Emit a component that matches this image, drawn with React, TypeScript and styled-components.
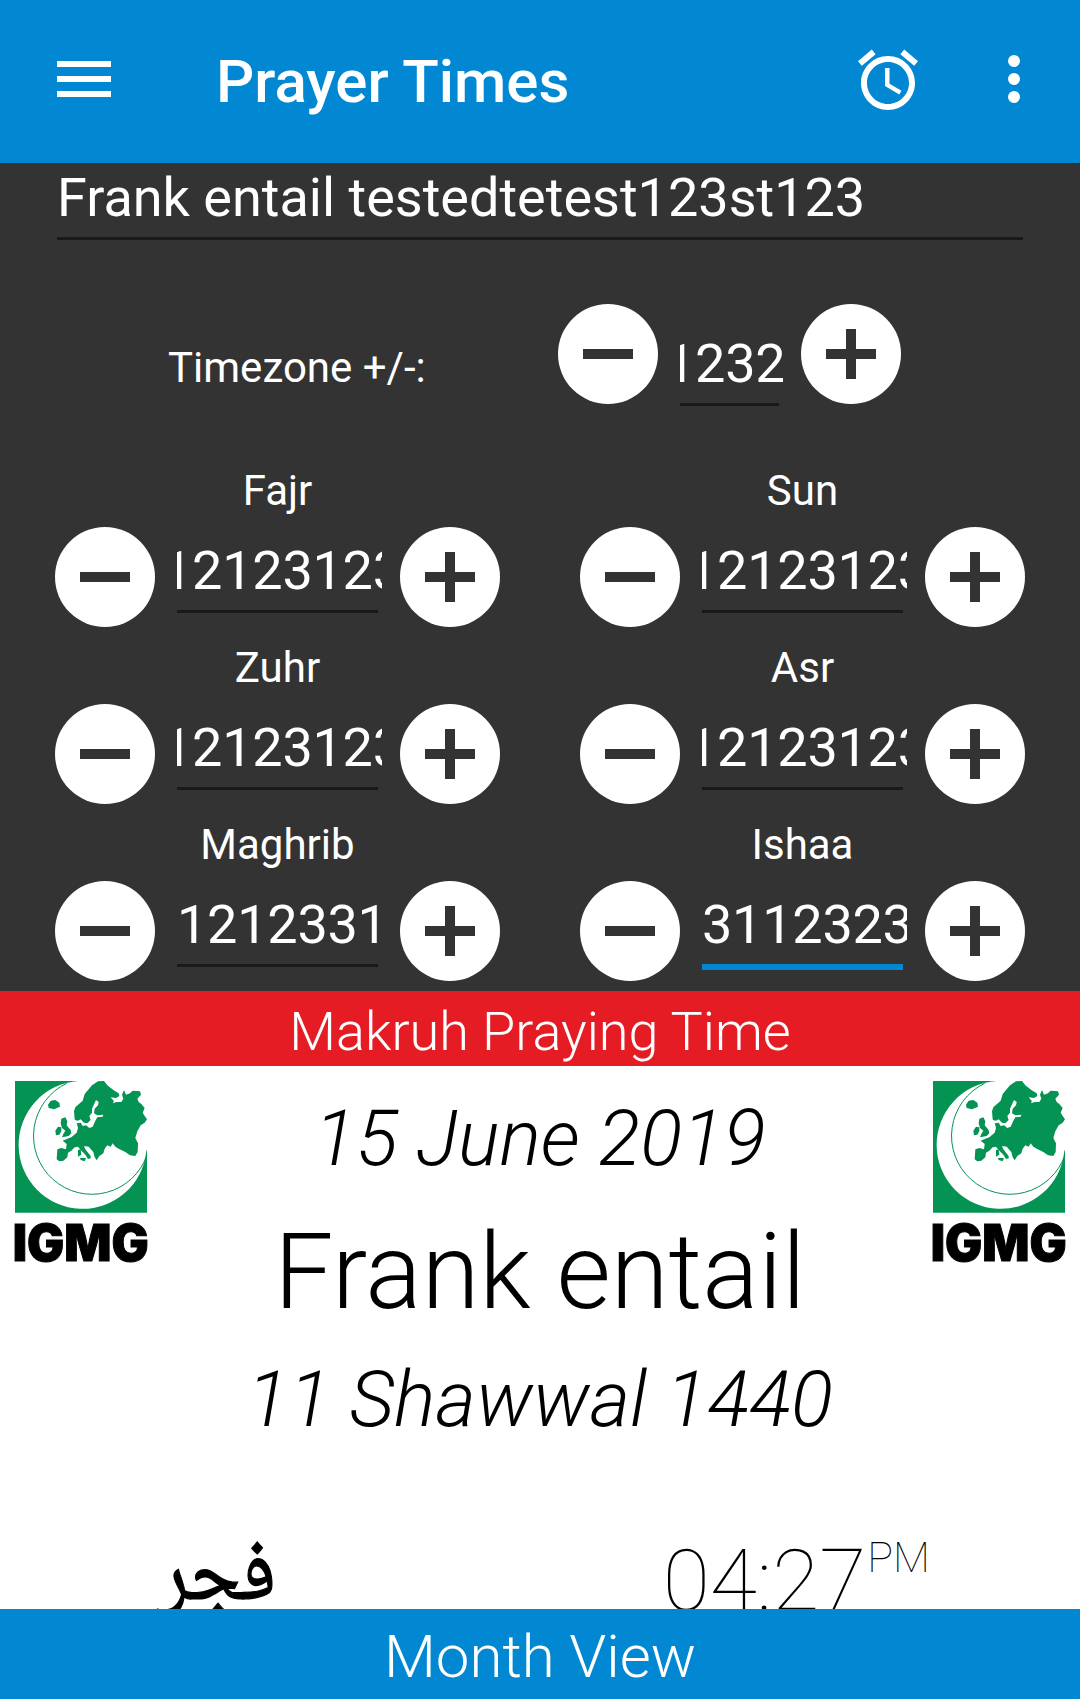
import React from 'react';
import styled, { createGlobalStyle } from 'styled-components';

const blue = '#0288d3';

const Global = createGlobalStyle`
  body { margin: 0; background: #fff; }
  * { box-sizing: border-box; }
`;

const Screen = styled.div`
  width: 1080px;
  height: 1699px;
  overflow: hidden;
  display: flex;
  flex-direction: column;
  font-family: Roboto, "Noto Sans", sans-serif;
  background: #fff;
`;

const AppBar = styled.header`
  height: 163px;
  flex: none;
  display: flex;
  align-items: flex-start;
  padding: 43px 30px 0 48px;
  background: ${blue};
  color: #fff;
`;

const Icon = styled.svg<{ $top?: number }>`
  width: 72px;
  height: 72px;
  flex: none;
  margin-top: ${(p) => p.$top ?? 0}px;
  fill: currentColor;
`;

const Title = styled.h1`
  flex: 1;
  margin: 0 0 0 96px;
  font-size: 60px;
  font-weight: 500;
  line-height: 77px;
  white-space: nowrap;
`;

const Actions = styled.div`
  display: flex;
  gap: 54px;
`;

const Settings = styled.section`
  height: 828px;
  flex: none;
  padding: 0 55px;
  background: #333;
  color: #fff;
`;

const NameField = styled.div`
  height: 77px;
  margin: 0 2px;
  border-bottom: 3px solid #191919;
  font-size: 54px;
  line-height: 69px;
  white-space: nowrap;
`;

const TimezoneRow = styled.div`
  display: flex;
  margin: 64px 0 0 113px;
`;

const TimezoneLabel = styled.div`
  width: 390px;
  font-size: 42px;
  line-height: 127px;
  white-space: nowrap;
`;

const Grid = styled.div`
  display: grid;
  grid-template-columns: 445px 445px;
  column-gap: 80px;
  margin-top: 37px;
`;

const Cell = styled.div`
  height: 177px;
`;

const Label = styled.div`
  height: 59px;
  font-size: 42px;
  line-height: 45px;
  text-align: center;
`;

const Row = styled.div`
  display: flex;
`;

const Round = styled.button`
  width: 100px;
  height: 100px;
  flex: none;
  padding: 25px;
  border: 0;
  border-radius: 50%;
  background: #fff;
  color: #333;
  svg { display: block; fill: currentColor; }
`;

const Field = styled.div<{ $width: number; $drop: number; $focused?: boolean }>`
  width: ${(p) => p.$width}px;
  height: 102px;
  margin: 0 18px 0 22px;
  padding-top: ${(p) => p.$drop}px;
  overflow: hidden;
  font-size: 54px;
  line-height: 87px;
  letter-spacing: -0.25px;
  white-space: nowrap;
  &::after {
    content: '';
    display: block;
    height: ${(p) => (p.$focused ? 6 : 3)}px;
    margin: -4px 4px 0 0;
    background: ${(p) => (p.$focused ? blue : '#191919')};
  }
`;

const Digits = styled.div<{ $shift: number }>`
  text-indent: ${(p) => p.$shift}px;
`;

const Warning = styled.div`
  height: 75px;
  flex: none;
  background: #e61c24;
  color: #fff;
  font-size: 54px;
  font-weight: 300;
  line-height: 81px;
  text-align: center;
`;

const Day = styled.main`
  flex: 1;
  min-height: 0;
  overflow: hidden;
  color: #000;
`;

const Head = styled.div`
  display: flex;
  justify-content: space-between;
  padding: 15px 15px 0;
  height: 443px;
`;

const LogoSvg = styled.svg`
  width: 132px;
  height: 180px;
  flex: none;
  overflow: visible;
`;

const Wordmark = styled.text`
  font-family: Inter, Roboto, sans-serif;
  font-size: 151px;
  font-weight: 900;
  stroke: #000;
  stroke-width: 3px;
`;

const Dates = styled.div`
  display: flex;
  flex-direction: column;
  align-items: center;
  font-weight: 300;
  white-space: nowrap;
`;

const DateLine = styled.div<{ $line: number }>`
  font-size: 77.7px;
  font-style: italic;
  line-height: ${(p) => p.$line}px;
`;

const City = styled.div`
  font-size: 105px;
  line-height: 153px;
`;

const TimeRow = styled.div`
  display: flex;
  justify-content: space-between;
  padding: 0 150px 0 158px;
`;

const Arabic = styled.div`
  font-family: "Noto Naskh Arabic", "Noto Sans Arabic", "DejaVu Sans", sans-serif;
  font-size: 87px;
  line-height: 143px;
  transform: scaleX(0.91);
  transform-origin: left;
  -webkit-text-stroke: 1.2px #000;
`;

const Time = styled.div`
  display: flex;
  font-size: 86px;
  font-weight: 100;
  line-height: 144px;
`;

const Meridiem = styled.span`
  margin-left: 1px;
  font-size: 43px;
  line-height: 96px;
`;

const MonthButton = styled.footer`
  height: 90px;
  flex: none;
  background: ${blue};
  color: #fff;
  font-size: 60px;
  font-weight: 300;
  line-height: 95px;
  text-align: center;
`;

type StepperProps = { value: string; width?: number; shift?: number; drop?: number; focused?: boolean };

function Stepper({ value, width = 205, shift = 0, drop = 0, focused }: StepperProps) {
  return (
    <Row>
      <Round aria-label="decrease">
        <svg width="50" height="50"><path d="M0 20h50v10H0z" /></svg>
      </Round>
      <Field $width={width} $drop={drop} $focused={focused}>
        <Digits $shift={shift}>{value}</Digits>
      </Field>
      <Round aria-label="increase">
        <svg width="50" height="50"><path d="M0 20h20V0h10v20h20v10H30v20H20V30H0z" /></svg>
      </Round>
    </Row>
  );
}

function Logo() {
  return (
    <LogoSvg viewBox="45 33 396 540">
      <path fill="#049353" d="M45 33h396v395H45z" />
      <path fill="#fff" d="M235 33A192 192 0 1 0 439 243L441 240V33z" />
      <path fill="none" stroke="#049353" strokeWidth="3" d="M200 40A175 175 0 1 0 441 255" />
      <g transform="translate(150 24)" fill="#049353">
        <path d="M72 100L76 88 98 68 104 48 126 22 144 10 162 9 172 22 190 36 206 46 208 54 198 60 182 58 192 70 188 76 200 72 214 72 220 62 216 50 222 36 228 50 240 46 248 38 270 40 273 50 262 62 266 72 274 78 284 90 278 104 284 114 291 124 284 134 272 142 262 160 256 180 264 196 263 222 256 234 240 232 226 222 206 212 196 206 188 196 182 206 172 202 164 212 160 226 148 234 140 247 134 238 130 222 116 206 102 204 106 214 122 234 122 241 114 243 106 230 92 216 84 206 74 208 64 218 54 224 52 238 40 248 28 250 20 244 22 214 34 210 48 214 50 198 38 188 52 182 64 178 80 164 84 150 80 134 74 124z" />
        <path d="M34 122L46 118 52 130 50 142 62 156 64 166 56 174 36 178 40 168 46 158 36 150 32 136zM24 146L34 148 34 160 28 170 18 172 16 158zM-6 80L2 68 16 66 28 74 30 86 12 94-4 90zM84 216L92 214 94 230 84 236zM90 240L108 240 104 250 92 246z" />
        <path fill="#fff" d="M74 126L84 128 92 124 102 134 112 136 122 126 118 114 126 104 126 92 138 66 146 72 144 82 134 92 132 106 142 112 160 110 158 116 142 118 136 128 128 146 118 150 108 142 98 144 92 134 80 136z" />
      </g>
      <Wordmark x="38" y="572" textLength="408" lengthAdjust="spacingAndGlyphs">IGMG</Wordmark>
    </LogoSvg>
  );
}

const offsets = [
  { name: 'Fajr', value: '12123123', shift: -15 },
  { name: 'Sun', value: '12123123', shift: -15 },
  { name: 'Zuhr', value: '12123123', shift: -15 },
  { name: 'Asr', value: '12123123', shift: -15 },
  { name: 'Maghrib', value: '1212331', shift: 0 },
  { name: 'Ishaa', value: '3112323', shift: 0, focused: true },
];

export default function App() {
  return (
    <Screen>
      <Global />
      <AppBar>
        <Icon viewBox="0 0 24 24"><path d="M3 18h18v-2H3v2zm0-5h18v-2H3v2zm0-7v2h18V6H3z" /></Icon>
        <Title>Prayer Times</Title>
        <Actions>
          <Icon viewBox="0 0 24 24" $top={1}>
            <path d="M22 5.72l-4.6-3.86-1.29 1.53 4.6 3.86L22 5.72zM7.88 3.39L6.6 1.86 2 5.71l1.29 1.53 4.59-3.85zM12.5 8H11v6l4.75 2.85.75-1.23-4-2.37V8zM12 4c-4.97 0-9 4.03-9 9s4.02 9 9 9c4.97 0 9-4.03 9-9s-4.03-9-9-9zm0 16c-3.87 0-7-3.13-7-7s3.13-7 7-7 7 3.13 7 7-3.13 7-7 7z" />
          </Icon>
          <Icon viewBox="0 0 24 24"><circle cx="12" cy="6" r="2" /><circle cx="12" cy="12" r="2" /><circle cx="12" cy="18" r="2" /></Icon>
        </Actions>
      </AppBar>
      <Settings>
        <NameField>Frank entail testedtetest123st123</NameField>
        <TimezoneRow>
          <TimezoneLabel>Timezone +/-:</TimezoneLabel>
          <Stepper value="1232" width={103} shift={-15} drop={16} />
        </TimezoneRow>
        <Grid>
          {offsets.map((o) => (
            <Cell key={o.name}>
              <Label>{o.name}</Label>
              <Stepper value={o.value} shift={o.shift} focused={o.focused} />
            </Cell>
          ))}
        </Grid>
      </Settings>
      <Warning>Makruh Praying Time</Warning>
      <Day>
        <Head>
          <Logo />
          <Dates>
            <DateLine $line={115}>15 June 2019</DateLine>
            <City>Frank entail</City>
            <DateLine $line={102}>11 Shawwal 1440</DateLine>
          </Dates>
          <Logo />
        </Head>
        <TimeRow>
          <Arabic lang="ar">فجر</Arabic>
          <Time>04:27<Meridiem>PM</Meridiem></Time>
        </TimeRow>
      </Day>
      <MonthButton>Month View</MonthButton>
    </Screen>
  );
}
